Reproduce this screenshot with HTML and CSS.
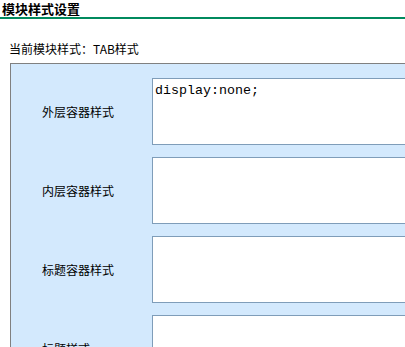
FILE: index.html
```html
<!DOCTYPE html>
<html>
<head>
<meta charset="utf-8">
<link rel="stylesheet" href="styles.css">
</head>
<body>
<div class="title">模块样式设置</div>
<div class="current">当前模块样式：TAB样式</div>
<div class="panel">
  <div class="row">
    <div class="label">外层容器样式</div>
    <textarea class="box">display:none;</textarea>
  </div>
  <div class="row">
    <div class="label">内层容器样式</div>
    <textarea class="box"></textarea>
  </div>
  <div class="row">
    <div class="label">标题容器样式</div>
    <textarea class="box"></textarea>
  </div>
  <div class="row">
    <div class="label">标题样式</div>
    <textarea class="box"></textarea>
  </div>
</div>
</body>
</html>
```
FILE: styles.css
```css
html, body {
  margin: 0;
  padding: 0;
  overflow: hidden;
  background: #fff;
}
body {
  font-family: "Noto Sans CJK SC", "Liberation Sans", sans-serif;
  font-size: 12px;
  color: #000;
}
.title {
  height: 17px;
  line-height: 17px;
  padding-left: 2px;
  font-size: 13px;
  font-weight: bold;
  border-bottom: 2px solid #008a5e;
  box-sizing: content-box;
}
.current {
  margin-top: 23px;
  padding-left: 9px;
  height: 14px;
  line-height: 14px;
}
.panel {
  margin-top: 7px;
  margin-left: 10px;
  width: 460px;
  border: 1px solid #808080;
  background: #d3e9fd;
  padding-top: 14px;
  display: flex;
  flex-direction: column;
  gap: 12px;
  box-sizing: border-box;
}
.row {
  display: flex;
  align-items: center;
}
.label {
  flex: 0 0 110px;
  padding-left: 31px;
  line-height: 14px;
}
.box {
  flex: 0 0 300px;
  width: 300px;
  height: 67px;
  box-sizing: border-box;
  border: 1px solid #7f9db9;
  background: #fff;
  margin: 0;
  padding: 4px 2px;
  font-family: "Liberation Mono", monospace;
  font-size: 13.33px;
  line-height: 15px;
  color: #000;
  resize: none;
  overflow: hidden;
  outline: none;
}
```
